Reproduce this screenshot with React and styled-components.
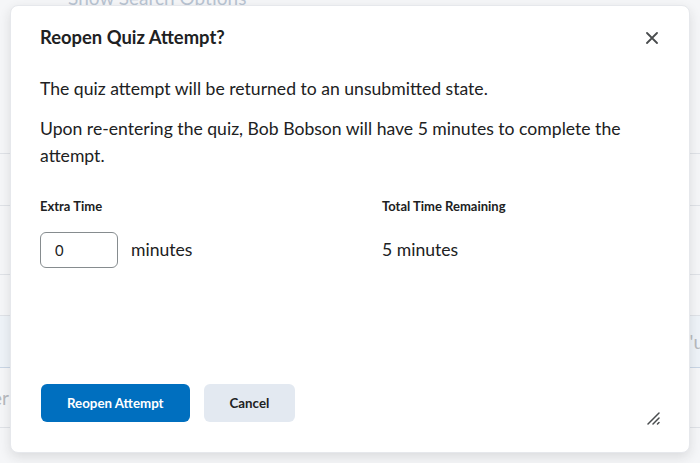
import React from "react";
import styled, { createGlobalStyle } from "styled-components";

const Global = createGlobalStyle`
  html, body { margin: 0; padding: 0; }
  body { font-family: Lato, "Noto Sans", sans-serif; color: #202122; background: #f4f5f7; }
  * { box-sizing: border-box; }
`;

const Page = styled.div`
  position: relative;
  width: 700px;
  height: 463px;
  overflow: hidden;
  background: #f5f6f8;
`;

const PageHeader = styled.div`
  display: flow-root;
  height: 154px;
  padding: 0 0 0 68px;
  border-bottom: 1px solid #dfe2e7;
`;

const FadedLink = styled.span`
  display: block;
  margin-top: -14px;
  font-size: 19px;
  color: #b9c4d2;
`;

const PageRow = styled.div`
  height: ${(p) => p.$h}px;
  border-bottom: 1px solid ${(p) => (p.$blue ? "#c9d6e5" : "#dfe2e7")};
  background: ${(p) => (p.$blue ? "#eef3f8" : "transparent")};
  display: flex;
  align-items: center;
  justify-content: space-between;
  font-size: 19px;
  color: #b7babe;
`;

const RowText = styled.span`
  margin: ${(p) => p.$m};
`;

const Dialog = styled.div`
  position: absolute;
  left: 10px;
  top: 5px;
  width: 680px;
  height: 448px;
  background: #ffffff;
  border-radius: 8px;
  border: 1px solid #e6e8ec;
  box-shadow: 0 4px 12px rgba(32, 33, 34, 0.12);
  display: flex;
  flex-direction: column;
  padding: 0 29px;
`;

const Header = styled.div`
  display: flex;
  align-items: flex-start;
  justify-content: space-between;
  padding-top: 17px;
`;

const Title = styled.h2`
  margin: 0;
  font-size: 18.4px;
  line-height: 28px;
  font-weight: 700;
  color: #202122;
`;

const CloseButton = styled.button`
  border: none;
  background: transparent;
  padding: 0;
  width: 24px;
  height: 24px;
  display: flex;
  align-items: center;
  justify-content: center;
  margin: 3px -3.5px 0 0;
  cursor: pointer;
`;

const Body = styled.div`
  flex: 1;
  padding-top: 24px;
`;

const Para = styled.p`
  margin: 0 0 13px;
  font-size: 17.6px;
  line-height: 27px;
  color: #202122;
`;

const Fields = styled.div`
  display: grid;
  grid-template-columns: 342px 1fr;
  margin-top: 27px;
`;

const Field = styled.div`
  display: flex;
  flex-direction: column;
`;

const Label = styled.label`
  font-size: 13px;
  line-height: 20px;
  font-weight: 700;
  color: #202122;
  margin-bottom: 16px;
`;

const InputRow = styled.div`
  display: flex;
  align-items: center;
  gap: 13px;
  height: 36px;
`;

const NumberInput = styled.input`
  width: 78px;
  height: 36px;
  border: 1px solid #868c8f;
  border-radius: 6px;
  padding: 0 14px;
  font-family: Lato, "Noto Sans", sans-serif;
  font-size: 14.8px;
  color: #202122;
  outline: none;
`;

const Value = styled.span`
  font-size: 17.6px;
  line-height: 24px;
  color: #202122;
`;

const Footer = styled.div`
  display: flex;
  align-items: center;
  gap: 14px;
  padding-bottom: 30px;
  position: relative;
`;

const Button = styled.button`
  height: 38px;
  padding: 0 26px;
  border: none;
  border-radius: 6px;
  font-family: Lato, "Noto Sans", sans-serif;
  font-size: 13.3px;
  font-weight: 700;
  background: ${(p) => (p.$primary ? "#006fbf" : "#e3e9f1")};
  color: ${(p) => (p.$primary ? "#ffffff" : "#202122")};
  cursor: pointer;
  ${(p) => (p.$primary ? "margin-left: 1px;" : "")}
`;

const Grip = styled.div`
  position: absolute;
  right: -1px;
  bottom: 29px;
  width: 14px;
  height: 14px;
`;

export default function App() {
  return (
    <Page>
      <Global />
      <PageHeader>
        <FadedLink>Show Search Options</FadedLink>
      </PageHeader>
      <PageRow $h={52} />
      <PageRow $h={69} />
      <PageRow $h={41} />
      <PageRow $h={52} $blue>
        <span />
        <RowText $m="0 -4px 0 0">'u</RowText>
      </PageRow>
      <PageRow $h={60}>
        <RowText $m="0 0 0 -8px">er</RowText>
      </PageRow>

      <Dialog role="dialog">
        <Header>
          <Title>Reopen Quiz Attempt?</Title>
          <CloseButton aria-label="Close">
            <svg width="12" height="12" viewBox="0 0 12 12">
              <path d="M1 1 L11 11 M11 1 L1 11" stroke="#494c4e" strokeWidth="1.8" strokeLinecap="round" />
            </svg>
          </CloseButton>
        </Header>
        <Body>
          <Para>The quiz attempt will be returned to an unsubmitted state.</Para>
          <Para>
            Upon re-entering the quiz, Bob Bobson will have 5 minutes to complete the attempt.
          </Para>
          <Fields>
            <Field>
              <Label>Extra Time</Label>
              <InputRow>
                <NumberInput defaultValue="0" />
                <Value>minutes</Value>
              </InputRow>
            </Field>
            <Field>
              <Label>Total Time Remaining</Label>
              <InputRow>
                <Value>5 minutes</Value>
              </InputRow>
            </Field>
          </Fields>
        </Body>
        <Footer>
          <Button $primary>Reopen Attempt</Button>
          <Button>Cancel</Button>
          <Grip>
            <svg width="14" height="14" viewBox="0 0 14 14">
              <path d="M1 13 L12 2 M6 13 L12 7 M10.5 13 L12 11.5" stroke="#494c4e" strokeWidth="1.5" strokeLinecap="round" />
            </svg>
          </Grip>
        </Footer>
      </Dialog>
    </Page>
  );
}
